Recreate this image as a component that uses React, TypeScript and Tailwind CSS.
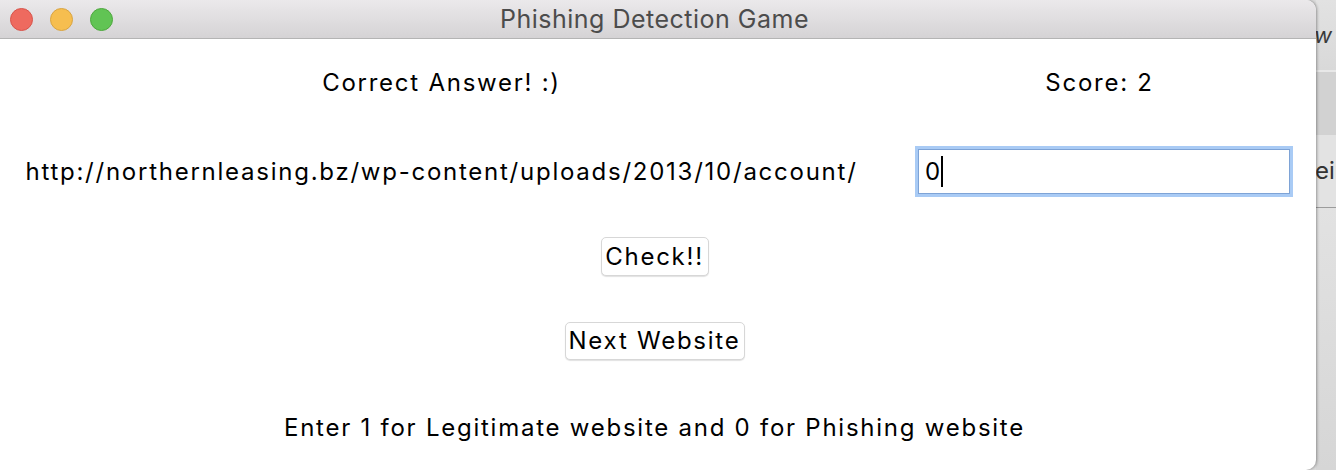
import React from "react";

const font = { fontFamily: "Inter, 'Noto Sans', 'Liberation Sans', sans-serif" };

export default function App() {
  return (
    <div
      className="w-[1336px] h-[470px] flex overflow-hidden bg-[#dcdcdc]"
      style={font}
    >
      {/* Main window */}
      <div className="relative z-10 w-[1316px] h-[470px] shrink-0 bg-white flex flex-col rounded-tr-[10px] rounded-br-[10px] overflow-hidden shadow-[1px_0_3px_rgba(0,0,0,0.35)]">
        {/* Title bar */}
        <div className="h-[39px] shrink-0 flex items-center relative bg-gradient-to-b from-[#ebe9eb] to-[#d5d3d5] border-b border-[#b4b4b4]">
          <div className="flex items-center gap-[17px] pl-[10px]">
            <span className="w-[23px] h-[23px] rounded-full bg-[#ee6a5f] border border-[#d8544b]" />
            <span className="w-[23px] h-[23px] rounded-full bg-[#f6be4f] border border-[#d9a441]" />
            <span className="w-[23px] h-[23px] rounded-full bg-[#61c454] border border-[#4ea83e]" />
          </div>
          <div className="absolute inset-0 flex items-center justify-center pr-[7px] text-[25px] tracking-[0.5px] text-[#4c4c4c] leading-none">
            Phishing Detection Game
          </div>
        </div>

        {/* Row 0 */}
        <div className="h-[88px] shrink-0 grid grid-cols-[883px_1fr] items-center text-[24px] tracking-[1.75px] text-black leading-none">
          <div className="flex justify-center">Correct Answer! :)</div>
          <div className="flex justify-center">Score: 2</div>
        </div>

        {/* Row 1 */}
        <div className="h-[89px] shrink-0 grid grid-cols-[883px_1fr] items-center text-[24px] tracking-[1.75px] text-black leading-none">
          <div className="flex justify-center">
            http://northernleasing.bz/wp-content/uploads/2013/10/account/
          </div>
          <div className="pl-[35px]">
            <div className="w-[372px] h-[45px] border border-[#7ea3d6] shadow-[0_0_0_3px_#a9cbf5] flex items-center pl-[6px]">
              <span className="tracking-normal">0</span>
              <span className="w-[2px] h-[31px] bg-black ml-[1px]" />
            </div>
          </div>
        </div>

        {/* Check button */}
        <div className="mt-[21px] flex justify-center pr-[7px]">
          <button className="w-[108px] h-[39px] bg-white border border-[#d7d7d7] rounded-[5px] shadow-[0_1px_1px_rgba(0,0,0,0.12)] text-[24px] tracking-[1.75px] text-black leading-none flex items-center justify-center">
            Check!!
          </button>
        </div>

        {/* Next website */}
        <div className="mt-[46px] flex justify-center pr-[7px]">
          <button className="w-[180px] h-[38px] bg-white border border-[#d7d7d7] rounded-[5px] shadow-[0_1px_1px_rgba(0,0,0,0.12)] text-[24px] tracking-[1.75px] text-black leading-none flex items-center justify-center">
            Next Website
          </button>
        </div>

        {/* Instruction */}
        <div className="mt-[53px] h-[30px] flex items-center justify-center pr-[7px] text-[24px] tracking-[1.75px] text-black leading-none">
          Enter 1 for Legitimate website and 0 for Phishing website
        </div>
      </div>

      {/* Background window strip */}
      <div className="flex-1 flex flex-col overflow-hidden">
        <div className="h-[70px] bg-gradient-to-b from-[#e2e2e2] to-[#d9d9d9] flex items-start pt-[24px] text-[22px] italic text-[#3a3a3a] leading-none whitespace-nowrap">
          <span className="-ml-[2px]">w</span>
          <span className="ml-[4px] text-[14px] not-italic text-[#777]">T</span>
        </div>
        <div className="h-[2px] bg-[#e8e8e8]" />
        <div className="h-[63px] bg-[#d2d2d2]" />
        <div className="h-[72px] bg-[#e3e3e3] flex items-center text-[24px] text-[#333] leading-none whitespace-nowrap">
          <span className="-ml-[1px]">ein</span>
        </div>
        <div className="h-[1px] bg-[#9c9c9c]" />
        <div className="flex-1 bg-gradient-to-b from-[#e2e2e2] to-[#d6d6d6]" />
      </div>
    </div>
  );
}
